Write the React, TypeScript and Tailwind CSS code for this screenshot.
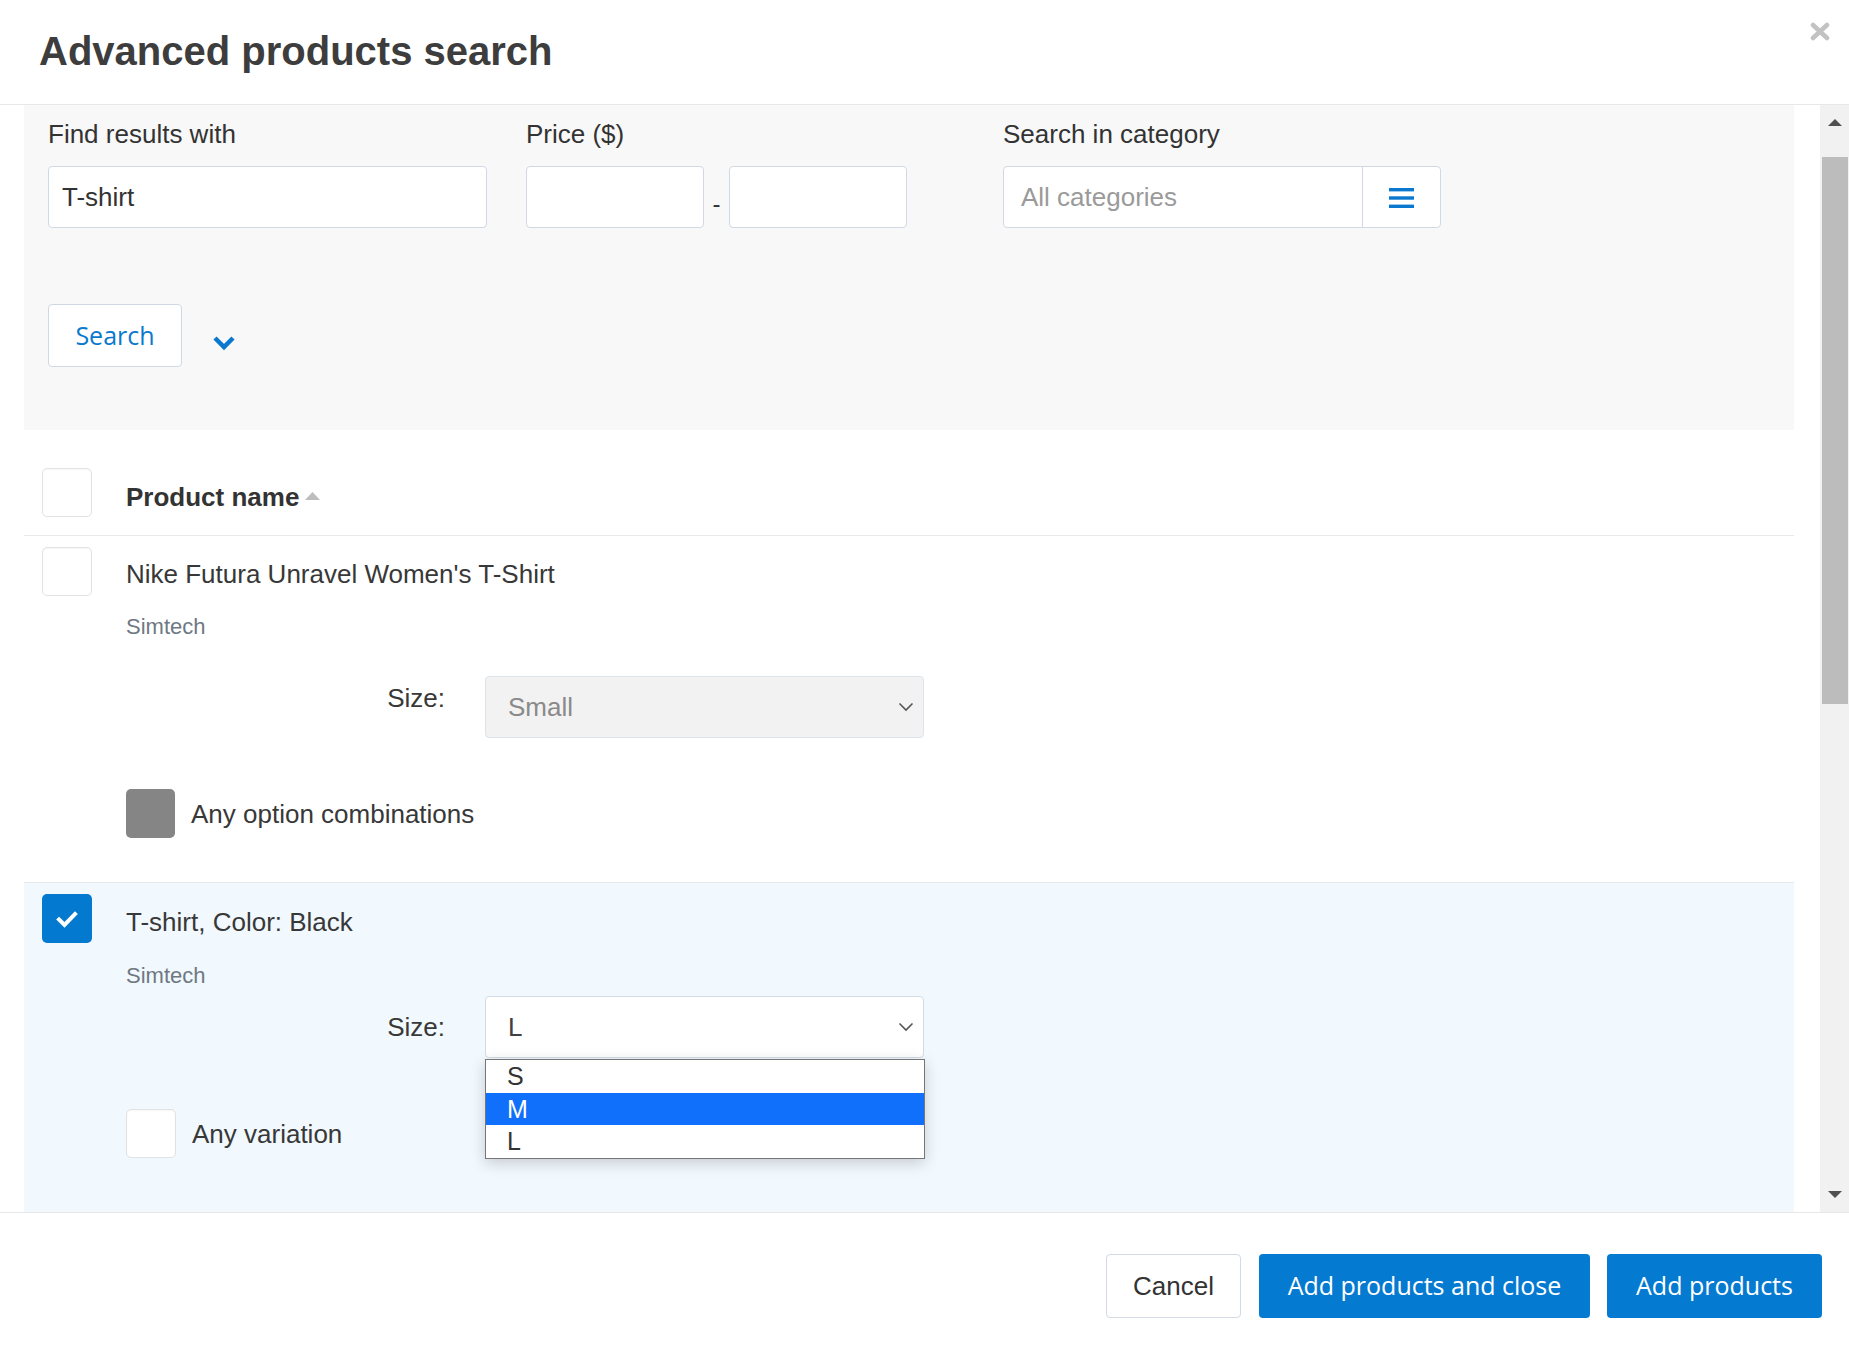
import React from "react";

const sans = "font-['Liberation_Sans',Arial,sans-serif]";
const ubuntu = "font-['Open_Sans','Noto_Sans',sans-serif]";

function Checkbox({ checked = false, muted = false }: { checked?: boolean; muted?: boolean }) {
  if (checked) {
    return (
      <div className="w-[50px] h-[49px] shrink-0 rounded-[5px] bg-[#0479d0] flex items-center justify-center">
        <svg width="22" height="18" viewBox="0 0 22 18">
          <path d="M3 9.5 L8.5 15 L19 4" fill="none" stroke="#fff" strokeWidth="4" strokeLinecap="square" />
        </svg>
      </div>
    );
  }
  if (muted) {
    return <div className="w-[49px] h-[49px] shrink-0 rounded-[5px] bg-[#858585]" />;
  }
  return (
    <div className="w-[50px] h-[49px] shrink-0 rounded-[5px] bg-white border border-[#e2e2e2] shadow-[inset_0_1px_2px_rgba(0,0,0,0.04)]" />
  );
}

function Chevron({ color = "#555" }: { color?: string }) {
  return (
    <svg width="16" height="10" viewBox="0 0 16 10">
      <path d="M1.5 1.5 L8 8 L14.5 1.5" fill="none" stroke={color} strokeWidth="1.6" />
    </svg>
  );
}

function SizeSelect({ value, disabled, open }: { value: string; disabled?: boolean; open?: boolean }) {
  return (
    <div className="relative">
      <div
        className={`w-[439px] h-[62px] rounded-[4px] border flex items-center justify-between pl-[22px] pr-[9px] text-[26px] ${
          disabled ? "bg-[#f2f2f2] border-[#dde3ea] text-[#8a8a8a]" : "bg-white border-[#d3dce6] text-[#404040]"
        }`}
      >
        <span className="pt-[1px]">{value}</span>
        <Chevron />
      </div>
      {open && (
        <div className="absolute left-0 top-[63px] w-[440px] bg-white border border-[#767676] shadow-[0_4px_14px_rgba(0,0,0,0.18)] z-10 text-[25px] leading-[33px]">
          <div className="h-[33px] pl-[21px] text-[#333]">S</div>
          <div className="h-[32px] pl-[21px] bg-[#1170fb] text-white">M</div>
          <div className="h-[33px] pl-[21px] text-[#333]">L</div>
        </div>
      )}
    </div>
  );
}

export default function App() {
  return (
    <div className={`w-[1849px] h-[1355px] bg-white flex flex-col overflow-hidden text-[#333] ${sans}`}>
      {/* header */}
      <div className="relative h-[105px] shrink-0 border-b border-[#e8e8e8] flex items-center pl-[39px]">
        <h1 className="text-[40px] font-bold text-[#3d3d3d] leading-none pb-[2px]">Advanced products search</h1>
        <button className="absolute right-[19px] top-[22px] w-[20px] h-[19px]">
          <svg width="20" height="19" viewBox="0 0 20 19">
            <path d="M3 3 L17 16 M17 3 L3 16" stroke="#c2c2c2" strokeWidth="4.5" strokeLinecap="round" />
          </svg>
        </button>
      </div>

      {/* body */}
      <div className="flex-1 min-h-0 flex">
        <div className="flex-1 min-w-0 overflow-hidden pl-[24px] pr-[26px]">
          {/* search panel */}
          <div className="bg-[#f8f8f8] h-[325px] pl-[24px] pt-[14px]">
            <div className="flex">
              <div className="w-[478px]">
                <div className="text-[26px] leading-[30px]">Find results with</div>
                <div className="mt-[17px] w-[439px] h-[62px] bg-white border border-[#d0d9e3] rounded-[4px] flex items-center pl-[13px] text-[26px] text-[#333]">
                  T-shirt
                </div>
              </div>
              <div className="w-[477px]">
                <div className="text-[26px] leading-[30px]">Price ($)</div>
                <div className="mt-[17px] flex">
                  <div className="w-[178px] h-[62px] bg-white border border-[#d0d9e3] rounded-[4px]" />
                  <div className="w-[25px] text-center text-[24px] pt-[20px]">-</div>
                  <div className="w-[178px] h-[62px] bg-white border border-[#d0d9e3] rounded-[4px]" />
                </div>
              </div>
              <div>
                <div className="text-[26px] leading-[30px]">Search in category</div>
                <div className="mt-[17px] w-[438px] h-[62px] bg-white border border-[#d0d9e3] rounded-[4px] flex">
                  <div className="flex-1 flex items-center pl-[17px] text-[26px] text-[#9a9a9a]">All categories</div>
                  <div className="w-[78px] border-l border-[#d0d9e3] flex items-center justify-center">
                    <svg width="25" height="21" viewBox="0 0 25 21">
                      <rect x="0" y="1" width="25" height="3.4" fill="#0a78cf" />
                      <rect x="0" y="9.3" width="25" height="3.4" fill="#0a78cf" />
                      <rect x="0" y="17.6" width="25" height="3.4" fill="#0a78cf" />
                    </svg>
                  </div>
                </div>
              </div>
            </div>
            <div className="mt-[76px] flex items-center">
              <button className={`w-[134px] h-[63px] bg-white border border-[#d0d9e3] rounded-[4px] text-[25px] text-[#0a79cd] ${ubuntu}`}>
                Search
              </button>
              <span className="ml-[30px] mt-[14px]">
                <svg width="24" height="16" viewBox="0 0 24 16">
                  <path d="M3 3 L12 12 L21 3" fill="none" stroke="#0a78cf" strokeWidth="4.5" />
                </svg>
              </span>
            </div>
          </div>

          {/* table header */}
          <div className="h-[106px] border-b border-[#e9e9e9] flex items-start">
            <div className="ml-[18px] mt-[38px]">
              <Checkbox />
            </div>
            <div className="ml-[34px] mt-[52px] flex items-center">
              <span className="text-[26px] leading-[30px] font-bold text-[#333]">Product name</span>
              <svg className="ml-[6px] mb-[2px]" width="15" height="8" viewBox="0 0 15 8">
                <path d="M0 8 L7.5 0 L15 8 Z" fill="#bdbdbd" />
              </svg>
            </div>
          </div>

          {/* row 1 */}
          <div className="h-[346px] flex items-start">
            <div className="ml-[18px] mt-[11px]">
              <Checkbox />
            </div>
            <div className="ml-[34px] mt-[23px]">
              <div className="text-[26px] leading-[30px] text-[#383838]">Nike Futura Unravel Women's T-Shirt</div>
              <div className="mt-[25px] text-[22px] leading-[26px] text-[#6f7882]">Simtech</div>
              <div className="mt-[36px] flex items-start">
                <div className="w-[319px] text-right text-[26px] leading-[30px] mt-[7px] text-[#383838]">Size:</div>
                <div className="ml-[40px]">
                  <SizeSelect value="Small" disabled />
                </div>
              </div>
              <div className="mt-[51px] flex items-center">
                <Checkbox muted />
                <span className="ml-[16px] text-[26px] text-[#383838] mt-[1px]">Any option combinations</span>
              </div>
            </div>
          </div>

          {/* row 2 */}
          <div className="border-t border-[#e8e8e8] bg-[#f1f8fe] h-[420px] flex items-start">
            <div className="ml-[18px] mt-[11px]">
              <Checkbox checked />
            </div>
            <div className="ml-[34px] mt-[24px]">
              <div className="text-[26px] leading-[30px] text-[#383838]">T-shirt, Color: Black</div>
              <div className="mt-[26px] text-[22px] leading-[26px] text-[#6f7882]">Simtech</div>
              <div className="mt-[7px] flex items-start">
                <div className="w-[319px] text-right text-[26px] leading-[30px] mt-[16px] text-[#383838]">Size:</div>
                <div className="ml-[40px]">
                  <SizeSelect value="L" open />
                </div>
              </div>
              <div className="mt-[51px] flex items-center">
                <Checkbox />
                <span className="ml-[16px] text-[26px] text-[#383838] mt-[1px]">Any variation</span>
              </div>
            </div>
          </div>
        </div>

        {/* scrollbar */}
        <div className="w-[29px] shrink-0 bg-[#f1f1f1] flex flex-col items-center">
          <svg className="mt-[14px]" width="14" height="7" viewBox="0 0 14 7">
            <path d="M0 7 L7 0 L14 7 Z" fill="#505050" />
          </svg>
          <div className="mt-[31px] w-[26px] h-[547px] bg-[#bcbcbc]" />
          <div className="flex-1" />
          <svg className="mb-[14px]" width="14" height="7" viewBox="0 0 14 7">
            <path d="M0 0 L14 0 L7 7 Z" fill="#505050" />
          </svg>
        </div>
      </div>

      {/* footer */}
      <div className="h-[143px] shrink-0 border-t border-[#e8e8e8] flex justify-end items-start pt-[41px] pr-[27px] gap-[17px]">
        <button className="w-[135px] h-[64px] bg-white border border-[#d2dae3] rounded-[4px] text-[26px] text-[#333] mr-[1px]">
          Cancel
        </button>
        <button className={`w-[331px] h-[64px] bg-[#047ad1] rounded-[4px] text-[25px] text-white ${ubuntu}`}>
          Add products and close
        </button>
        <button className={`w-[215px] h-[64px] bg-[#047ad1] rounded-[4px] text-[25px] text-white ${ubuntu}`}>
          Add products
        </button>
      </div>
    </div>
  );
}
